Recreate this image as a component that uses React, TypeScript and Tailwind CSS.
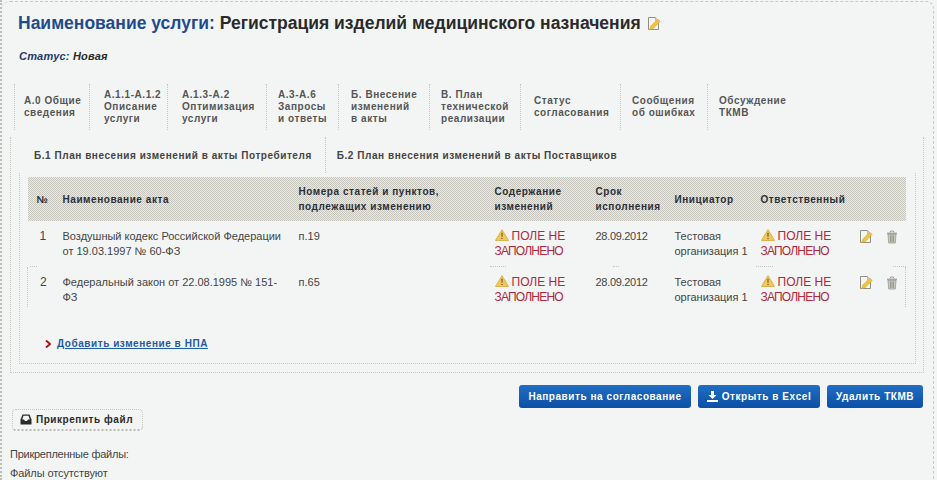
import React from "react";

const F = "[font-family:'Liberation_Sans',Arial,sans-serif]";

function EditIcon({ className = "" }: { className?: string }) {
  return (
    <svg viewBox="0 0 14 15" width="14" height="15" className={className}>
      <path d="M1.500 1.500h7l3 3v9h-10z" fill="#f6f5ef" stroke="#8f8f86" strokeWidth="1" />
      <path d="M8.500 1.500v3h3" fill="#e6e4da" stroke="#a8a89e" strokeWidth="0.7" />
      <path d="M3.500 10.500 10.600 3.200l2.600 2.200-7 7.200-3.300.8z" fill="#efc441" stroke="#d9a52a" strokeWidth="0.6" />
    </svg>
  );
}

function TrashIcon() {
  return (
    <svg viewBox="0 0 12 14" width="12" height="14">
      <path d="M1 2.600h10V4.400H1z" fill="#a8a8a0" />
      <path d="M4 2.500 4.600 1h2.800L8 2.500" fill="none" stroke="#9a9a92" />
      <path d="M2 4.400h8l-.7 8.600H2.700z" fill="#c9c9c2" stroke="#9a9a92" strokeWidth="0.8" />
      <path d="M4.500 5.500v6.500M6 5.500v6.500M7.500 5.500v6.500" stroke="#85857e" strokeWidth="0.7" />
    </svg>
  );
}

function Warning() {
  return (
    <svg viewBox="0 0 14 12" width="14" height="12" className="inline-block align-[-1px] mr-[3px]">
      <path d="M7 .6 13.600 11.500H.4z" fill="#eec860" stroke="#d9a93a" strokeWidth="0.8" strokeLinejoin="round" />
      <path d="M6.400 3.800h1.200l-.2 4.300h-.8zM6.400 8.900h1.200v1.200H6.400z" fill="#6b4a10" />
    </svg>
  );
}

function NotFilled() {
  return (
    <span className="text-[12px] leading-[15px] text-[#b0283a]">
      <Warning />
      ПОЛЕ НЕ <span className="tracking-[-0.8px]">ЗАПОЛНЕНО</span>
    </span>
  );
}

const tabs: { label: React.ReactNode; w: string; px: string }[] = [
  { label: <>А.0 Общие<br />сведения</>, w: "w-[76px]", px: "pl-[9px]" },
  { label: <>А.1.1-А.1.2<br />Описание<br />услуги</>, w: "w-[78px]", px: "pl-[14px]" },
  { label: <>А.1.3-А.2<br />Оптимизация<br />услуги</>, w: "w-[99px]", px: "pl-[14px]" },
  { label: <>А.3-А.6<br />Запросы<br />и ответы</>, w: "w-[72px]", px: "pl-[11px]" },
  { label: <>Б. Внесение<br />изменений<br />в акты</>, w: "w-[91px]", px: "pl-[12px]" },
  { label: <>В. План<br />технической<br />реализации</>, w: "w-[91px]", px: "pl-[11px]" },
  { label: <>Статус<br />согласования</>, w: "w-[100px]", px: "pl-[13px]" },
  { label: <>Сообщения<br />об ошибках</>, w: "w-[87px]", px: "pl-[11px]" },
  { label: <>Обсуждение<br />ТКМВ</>, w: "w-[100px]", px: "pl-[11px]" },
];

const rows = [
  { n: 1, name: <>Воздушный кодекс Российской Федерации<br />от 19.03.1997 № 60-ФЗ</>, art: "п.19" },
  { n: 2, name: <>Федеральный закон от 22.08.1995 № 151-<br />ФЗ</>, art: "п.65" },
];

const th = "text-left font-bold text-[10px] leading-[15px] tracking-[0.55px] text-[#2b2f3a] pl-[7px] align-middle";
const td = "align-top pt-[8px] pl-[7px] text-[11px] leading-[15px] text-[#444]";
const dots = "border-b border-dotted border-[#c4c4c0]";

export default function App() {
  return (
    <div className={`${F} w-[937px] h-[480px] overflow-hidden bg-[#f3f5f5] border-l-2 border-dotted border-[#bdbdb5]`}>
      <div className="w-[932px] h-[500px] mt-[1px] border-t border-r border-dashed border-[#c8c8c4] rounded-tr-lg rounded-tl-lg">
        <h1 className="mt-[11px] ml-[16px] text-[17.5px] leading-[20px] font-bold text-[#2a2a2a] flex items-center">
          <span className="text-[#1f4a8f]">Наименование услуги:</span>
          <span className="ml-[5px]">Регистрация изделий медицинского назначения</span>
          <EditIcon className="ml-[6px]" />
        </h1>
        <p className="mt-[16px] ml-[17px] text-[11px] leading-[15px] italic font-bold tracking-[0.2px] text-[#2a2a2a]">
          <span className="text-[#1f3a6f]">Статус:</span> Новая
        </p>
        <div className="mt-[20px] ml-[12px] flex h-[46px] items-center">
          {tabs.map((t, i) => (
            <div
              key={i}
              className={`${t.w} ${t.px} h-full flex items-center font-bold text-[10px] leading-[12px] tracking-[0.55px] text-[#555] ${i < 8 ? "border-r" : ""} ${i === 0 ? "border-l" : ""} border-dotted border-[#c4c4c0]`}
            >
              <div>{t.label}</div>
            </div>
          ))}
        </div>
        <div className="mt-[7px] ml-[8px] w-[914px] h-[236px] border-l border-r border-b border-dotted border-[#c4c4c0] pl-[8px] pr-[7px]">
          <div className="flex h-[36px] items-center font-bold text-[10px] tracking-[0.55px] text-[#444]">
            <div className="pl-[15px] pr-[13px] h-full flex items-center">Б.1 План внесения изменений в акты Потребителя</div>
            <div className="pl-[11px] h-full flex items-center border-l border-dotted border-[#c4c4c0]">Б.2 План внесения изменений в акты Поставщиков</div>
          </div>
          <div className="h-[191px] border-l border-r border-b border-dotted border-[#c4c4c0] pt-[4px] pl-[7px] pr-[8px]">
            <table className="w-[878px] table-fixed border-collapse">
              <colgroup>
                <col className="w-[28px]" />
                <col className="w-[236px]" />
                <col className="w-[196px]" />
                <col className="w-[101px]" />
                <col className="w-[79px]" />
                <col className="w-[86px]" />
                <col className="w-[100px]" />
                <col className="w-[52px]" />
              </colgroup>
              <thead>
                <tr className="h-[44px] bg-[repeating-conic-gradient(#c6c6be_0_25%,#ebebe6_0_50%)] bg-[length:2px_2px]">
                  <th className={`${th} !pl-[9px]`}>№</th>
                  <th className={th}>Наименование акта</th>
                  <th className={th}>Номера статей и пунктов,<br />подлежащих изменению</th>
                  <th className={th}>Содержание<br />изменений</th>
                  <th className={th}>Срок<br />исполнения</th>
                  <th className={th}>Инициатор</th>
                  <th className={th}>Ответственный</th>
                  <th className={th}></th>
                </tr>
              </thead>
              <tbody>
                {rows.map((r, i) => {
                  const pb = i === 0 ? "pb-[7px]" : "pb-[2px]";
                  return (
                    <React.Fragment key={r.n}>
                      <tr>
                        <td className={`${td} ${pb} !pl-[12px] text-[12px] ${i === 1 ? "border-l border-dotted border-[#c4c4c0]" : ""}`}>{r.n}</td>
                        <td className={`${td} ${pb}`}>{r.name}</td>
                        <td className={`${td} ${pb}`}>{r.art}</td>
                        <td className={`${td} ${pb}`}><NotFilled /></td>
                        <td className={`${td} ${pb} tracking-[-0.3px]`}>28.09.2012</td>
                        <td className={`${td} ${pb}`}>Тестовая<br />организация 1</td>
                        <td className={`${td} ${pb}`}><NotFilled /></td>
                        <td className={`${td} ${pb} !pl-[5px] ${i === 1 ? "border-r border-dotted border-[#c4c4c0]" : ""}`}>
                          <div className="flex gap-[13px] items-center">
                            <EditIcon />
                            <TrashIcon />
                          </div>
                        </td>
                      </tr>
                      {i === 0 && (
                        <tr>
                          <td colSpan={8} className="p-0 h-[1px]">
                            <div className="flex h-[1px]">
                              <div className={`ml-[2px] w-[7px] ${dots}`} />
                              <div className={`ml-[453px] w-[16px] ${dots}`} />
                              <div className={`ml-[107px] w-[6px] ${dots}`} />
                              <div className={`ml-[137px] w-[17px] ${dots}`} />
                              <div className={`ml-[120px] w-[13px] ${dots}`} />
                            </div>
                          </td>
                        </tr>
                      )}
                    </React.Fragment>
                  );
                })}
              </tbody>
            </table>
            <div className="mt-[29px] ml-[18px] flex items-center gap-[6px]">
              <svg viewBox="0 0 6 8" width="6" height="8">
                <path d="M1 .5 5 4 1 7.500" fill="none" stroke="#a81c1c" strokeWidth="2" />
              </svg>
              <a className="font-bold text-[10px] leading-[15px] tracking-[0.55px] text-[#1f5aa0] underline">Добавить изменение в НПА</a>
            </div>
          </div>
        </div>
        <div className="mt-[12px] mr-[10px] flex justify-end gap-[7px]">
          {[
            { t: "Направить на согласование", w: "w-[172px]", ic: false },
            { t: "Открыть в Excel", w: "w-[122px]", ic: true },
            { t: "Удалить ТКМВ", w: "w-[96px]", ic: false },
          ].map((b) => (
            <button
              key={b.t}
              className={`${b.w} h-[23px] rounded-[3px] bg-gradient-to-b from-[#1f6fc4] to-[#0c4fa6] text-white font-bold text-[10px] tracking-[0.55px] flex items-center justify-center gap-[4px]`}
            >
              {b.ic && (
                <svg viewBox="0 0 11 11" width="11" height="11">
                  <path d="M4 0h3v4h2.500L5.500 8 1.500 4H4zM0 9h11v2H0z" fill="#fff" />
                </svg>
              )}
              {b.t}
            </button>
          ))}
        </div>
        <button className="ml-[10px] mt-[1px] w-[131px] h-[22px] block rounded-[4px] border border-dotted border-[#c4c4be] border-b-[#bcbcb4] border-b-2 pr-[2px] font-bold text-[10px] tracking-[0.55px] text-[#2a2a2a]">
          <span className="flex items-center justify-center gap-[4px]">
            <svg viewBox="0 0 12 11" width="12" height="11">
              <path d="M2.500.5h7l2 5v5H.5v-5z" fill="#2a2a2a" />
              <path d="M3.500 1.800h5L9.800 5.500H8L7 7H5L4 5.500H2.200z" fill="#f3f5f5" />
            </svg>
            Прикрепить файл
          </span>
        </button>
        <p className="ml-[8px] mt-[16px] text-[11px] leading-[15px] tracking-[-0.25px] text-[#444]">Прикрепленные файлы:</p>
        <p className="ml-[8px] mt-[4px] text-[11px] leading-[15px] tracking-[-0.1px] text-[#444]">Файлы отсутствуют</p>
      </div>
    </div>
  );
}
